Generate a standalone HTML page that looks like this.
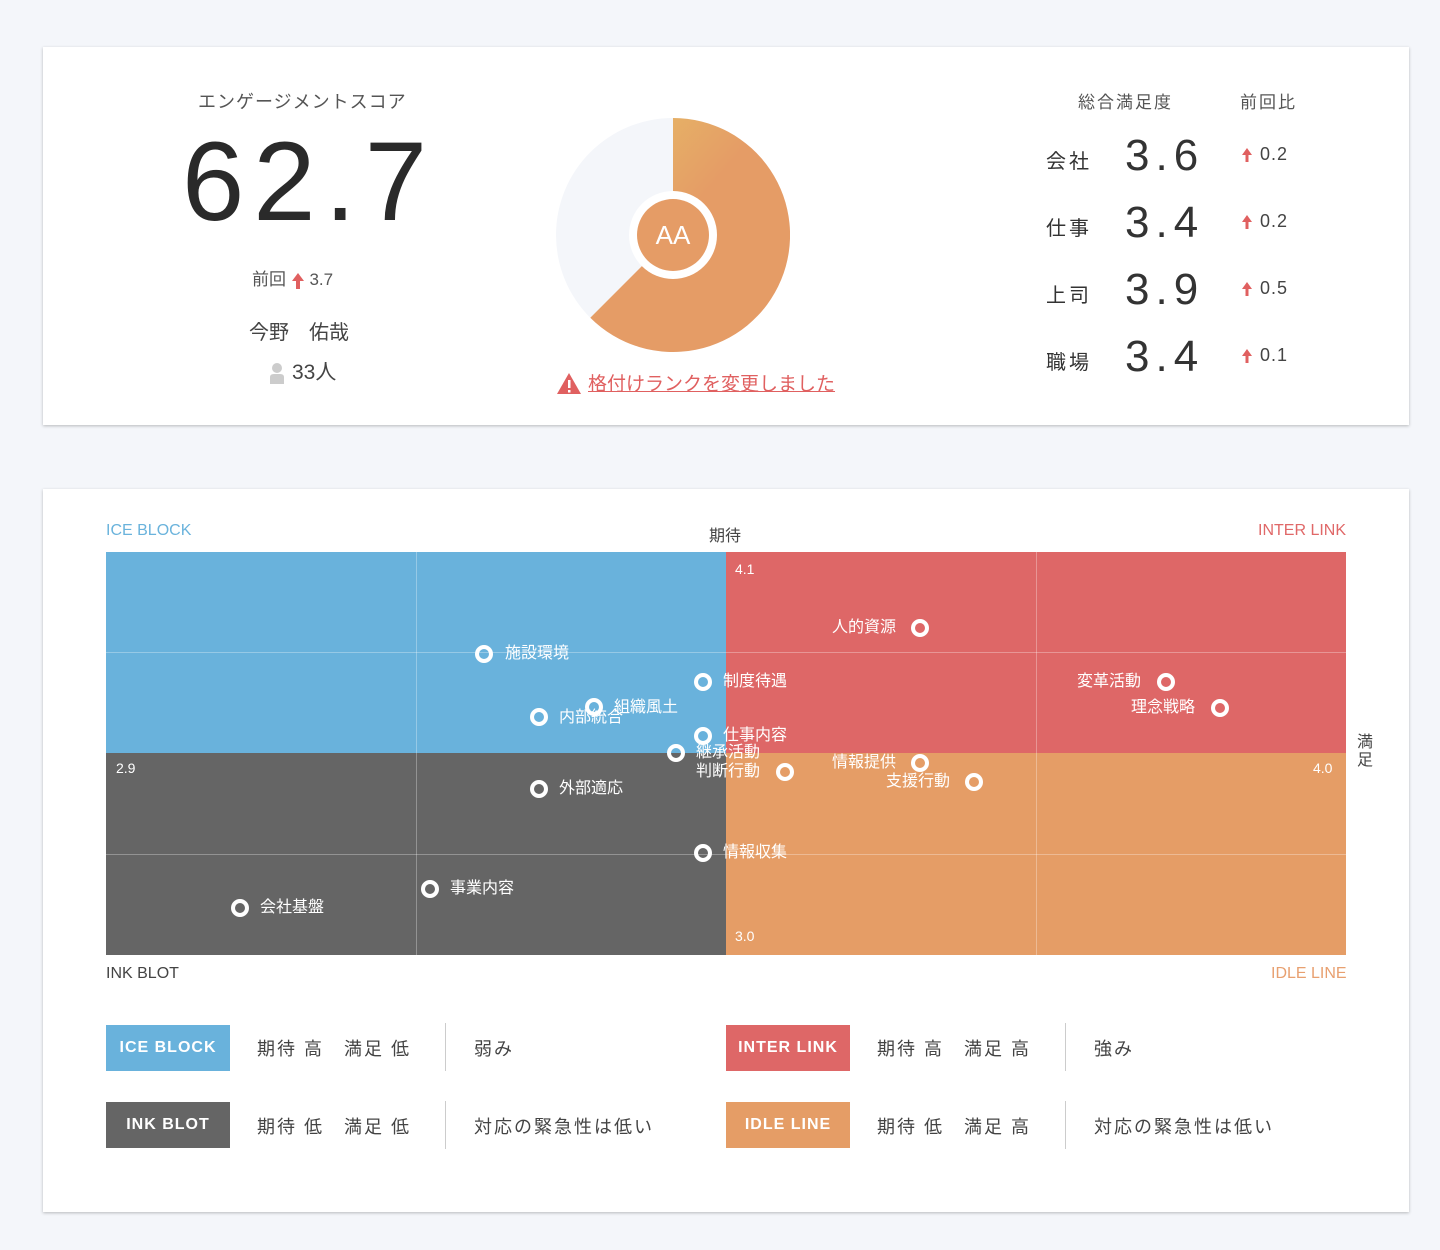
<!DOCTYPE html>
<html><head><meta charset="utf-8"><style>
*{margin:0;padding:0;box-sizing:border-box}
body{width:1440px;height:1250px;background:#f4f6fa;font-family:"Liberation Sans","Noto Sans CJK JP",sans-serif;color:#333;position:relative;overflow:hidden}
.card{position:absolute;left:43px;width:1366px;background:#fff;box-shadow:0 1px 3px rgba(0,0,0,.25)}
.a{position:absolute;white-space:nowrap}
.q{position:absolute}
.pt{position:absolute;width:18px;height:18px;border:4px solid #fff;border-radius:50%;margin:-9px 0 0 -9px}
.lb{position:absolute;color:#fff;font-size:16px;line-height:20px;margin-top:-10px;white-space:nowrap}
.badge{position:absolute;width:124px;height:46px;color:#fff;font-size:16px;letter-spacing:1px;text-align:center;line-height:46px;font-weight:bold}
.lt{position:absolute;font-size:18px;color:#444;letter-spacing:2px;white-space:nowrap}
.sep{position:absolute;width:1px;height:48px;background:#ccc}
.ar{display:inline-block;vertical-align:middle}
</style></head><body>
<div class="card" style="top:47px;height:378px"></div>
<div class="a" style="left:198px;top:88px;font-size:18px;color:#555;letter-spacing:1px">エンゲージメントスコア</div>
<div class="a" style="left:182px;top:122px;font-size:112px;line-height:120px;color:#2a2a2a;font-weight:300;letter-spacing:9px">62.7</div>
<div class="a" style="left:252px;top:265px;font-size:17px;color:#555">前回 <svg class="ar" width="14" height="18" viewBox="0 0 14 18"><path d="M7 1 L13 9 L9 9 L9 17 L5 17 L5 9 L1 9Z" fill="#e06060"/></svg> 3.7</div>
<div class="a" style="left:249px;top:316px;font-size:20px;color:#444">今野　佑哉</div>
<div class="a" style="left:268px;top:356px;font-size:21px;color:#444"><svg class="ar" width="18" height="22" viewBox="0 0 18 22" style="margin-right:6px"><circle cx="9" cy="6" r="5" fill="#ccc"/><path d="M2 22 L2 15 Q2 12 6 12 L12 12 Q16 12 16 15 L16 22Z" fill="#ccc"/></svg>33人</div>
<svg class="a" style="left:556px;top:118px" width="234" height="234" viewBox="-117 -117 234 234">
<defs><linearGradient id="g" x1="0" y1="0" x2="1" y2="1"><stop offset="0" stop-color="#e6c066"/><stop offset=".45" stop-color="#e59c66"/><stop offset="1" stop-color="#e59c66"/></linearGradient></defs>
<circle r="117" fill="#f4f6fa"/>
<path d="M0 0 L0 -117 A117 117 0 1 1 -82.7 82.7 Z" fill="url(#g)"/>
<circle r="44" fill="#fff"/><circle r="36" fill="#e59c66"/>
<text y="9" text-anchor="middle" fill="#fff" font-size="26" font-family="Liberation Sans">AA</text>
</svg>
<svg class="a" style="left:556px;top:371px" width="26" height="24"><path d="M13 2 L25 23 L1 23Z" fill="#e06060"/><rect x="12" y="9" width="2.5" height="8" fill="#fff"/><rect x="12" y="19" width="2.5" height="2.5" fill="#fff"/></svg>
<div class="a" style="left:588px;top:369px;font-size:19px;color:#e06060;text-decoration:underline">格付けランクを変更しました</div>
<div class="a" style="left:1078px;top:88px;font-size:17px;color:#555;letter-spacing:2px">総合満足度</div>
<div class="a" style="left:1240px;top:88px;font-size:17px;color:#555;letter-spacing:2px">前回比</div>
<div class="a" style="left:1046px;top:145px;width:60px;font-size:20px;color:#333">
<div style="position:absolute;top:0;letter-spacing:3px">会社</div><div style="position:absolute;top:67px;letter-spacing:3px">仕事</div><div style="position:absolute;top:134px;letter-spacing:3px">上司</div><div style="position:absolute;top:201px;letter-spacing:3px">職場</div></div>
<div class="a" style="left:1125px;top:122px;font-size:44px;font-weight:300;color:#333;letter-spacing:6px;line-height:67px">3.6<br>3.4<br>3.9<br>3.4</div>
<div class="a" style="left:1240px;top:121px;font-size:18px;color:#444;letter-spacing:1px;line-height:67px">
<svg class="ar" width="14" height="18" viewBox="0 0 14 18"><path d="M7 2 L12 9 L8.5 9 L8.5 16 L5.5 16 L5.5 9 L2 9Z" fill="#e06060"/></svg> 0.2<br>
<svg class="ar" width="14" height="18" viewBox="0 0 14 18"><path d="M7 2 L12 9 L8.5 9 L8.5 16 L5.5 16 L5.5 9 L2 9Z" fill="#e06060"/></svg> 0.2<br>
<svg class="ar" width="14" height="18" viewBox="0 0 14 18"><path d="M7 2 L12 9 L8.5 9 L8.5 16 L5.5 16 L5.5 9 L2 9Z" fill="#e06060"/></svg> 0.5<br>
<svg class="ar" width="14" height="18" viewBox="0 0 14 18"><path d="M7 2 L12 9 L8.5 9 L8.5 16 L5.5 16 L5.5 9 L2 9Z" fill="#e06060"/></svg> 0.1</div>

<div class="card" style="top:489px;height:723px"></div>
<div class="a" style="left:106px;top:522px;font-size:16px;color:#6ab3dc">ICE BLOCK</div>
<div class="a" style="left:709px;top:522px;font-size:16px;color:#444">期待</div>
<div class="a" style="left:1258px;top:522px;font-size:16px;color:#e06868">INTER LINK</div>
<div class="a" style="left:106px;top:965px;font-size:16px;color:#444">INK BLOT</div>
<div class="a" style="left:1271px;top:965px;font-size:16px;color:#e8a070">IDLE LINE</div>
<div class="a" style="left:1357px;top:734px;font-size:16px;line-height:18px;color:#444">満<br>足</div>
<div class="q" style="left:106px;top:552px;width:620px;height:201px;background:#69b2dc"></div>
<div class="q" style="left:726px;top:552px;width:620px;height:201px;background:#de6767"></div>
<div class="q" style="left:106px;top:753px;width:620px;height:202px;background:#656565"></div>
<div class="q" style="left:726px;top:753px;width:620px;height:202px;background:#e59d66"></div>
<div class="q" style="left:416px;top:552px;width:1px;height:403px;background:rgba(255,255,255,.3)"></div>
<div class="q" style="left:1036px;top:552px;width:1px;height:403px;background:rgba(255,255,255,.3)"></div>
<div class="q" style="left:106px;top:652px;width:1240px;height:1px;background:rgba(255,255,255,.3)"></div>
<div class="q" style="left:106px;top:854px;width:1240px;height:1px;background:rgba(255,255,255,.3)"></div>
<div class="lb" style="left:735px;top:569px;font-size:14px">4.1</div>
<div class="lb" style="left:116px;top:768px;font-size:14px">2.9</div>
<div class="lb" style="left:1313px;top:768px;font-size:14px">4.0</div>
<div class="lb" style="left:735px;top:936px;font-size:14px">3.0</div>

<div class="pt" style="left:484px;top:654px"></div><div class="lb" style="left:505px;top:654px">施設環境</div>
<div class="pt" style="left:920px;top:628px"></div><div class="lb" style="left:832px;top:628px">人的資源</div>
<div class="pt" style="left:703px;top:682px"></div><div class="lb" style="left:723px;top:682px">制度待遇</div>
<div class="pt" style="left:594px;top:707px"></div><div class="lb" style="left:614px;top:708px">組織風土</div>
<div class="pt" style="left:539px;top:717px"></div><div class="lb" style="left:559px;top:718px">内部統合</div>
<div class="pt" style="left:703px;top:736px"></div><div class="lb" style="left:723px;top:736px">仕事内容</div>
<div class="pt" style="left:676px;top:753px"></div><div class="lb" style="left:696px;top:753px">継承活動</div>
<div class="pt" style="left:785px;top:772px"></div><div class="lb" style="left:696px;top:772px">判断行動</div>
<div class="pt" style="left:920px;top:763px"></div><div class="lb" style="left:832px;top:763px">情報提供</div>
<div class="pt" style="left:974px;top:782px"></div><div class="lb" style="left:886px;top:782px">支援行動</div>
<div class="pt" style="left:1166px;top:682px"></div><div class="lb" style="left:1077px;top:682px">変革活動</div>
<div class="pt" style="left:1220px;top:708px"></div><div class="lb" style="left:1131px;top:708px">理念戦略</div>
<div class="pt" style="left:539px;top:789px"></div><div class="lb" style="left:559px;top:789px">外部適応</div>
<div class="pt" style="left:703px;top:853px"></div><div class="lb" style="left:723px;top:853px">情報収集</div>
<div class="pt" style="left:430px;top:889px"></div><div class="lb" style="left:450px;top:889px">事業内容</div>
<div class="pt" style="left:240px;top:908px"></div><div class="lb" style="left:260px;top:908px">会社基盤</div>

<div class="badge" style="left:106px;top:1025px;background:#69b2dc">ICE BLOCK</div>
<div class="lt" style="left:257px;top:1035px">期待 高　満足 低</div>
<div class="sep" style="left:445px;top:1023px"></div>
<div class="lt" style="left:474px;top:1035px">弱み</div>
<div class="badge" style="left:726px;top:1025px;background:#de6767">INTER LINK</div>
<div class="lt" style="left:877px;top:1035px">期待 高　満足 高</div>
<div class="sep" style="left:1065px;top:1023px"></div>
<div class="lt" style="left:1094px;top:1035px">強み</div>
<div class="badge" style="left:106px;top:1102px;background:#656565">INK BLOT</div>
<div class="lt" style="left:257px;top:1113px">期待 低　満足 低</div>
<div class="sep" style="left:445px;top:1101px"></div>
<div class="lt" style="left:474px;top:1113px">対応の緊急性は低い</div>
<div class="badge" style="left:726px;top:1102px;background:#e59d66">IDLE LINE</div>
<div class="lt" style="left:877px;top:1113px">期待 低　満足 高</div>
<div class="sep" style="left:1065px;top:1101px"></div>
<div class="lt" style="left:1094px;top:1113px">対応の緊急性は低い</div>
</body></html>
